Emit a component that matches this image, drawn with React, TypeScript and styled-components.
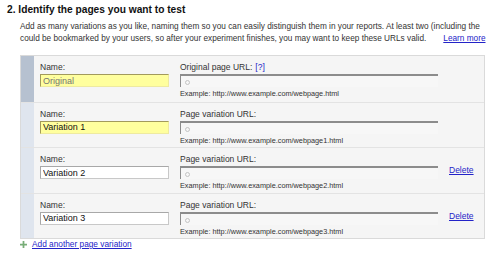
import React from "react";
import styled, { createGlobalStyle } from "styled-components";

const COLORS = {
  text: "#222222",
  link: "#2323c8",
  border: "#dadada",
  rowBg: "#f5f5f5",
  handle: "#dfe5ee",
  handleActive: "#b6c1d0",
  highlight: "#ffff9e",
};

interface Variation {
  name: string;
  urlLabel: string;
  example: string;
  placeholder?: boolean;
  highlight?: boolean;
  deletable?: boolean;
}

const VARIATIONS: Variation[] = [
  {
    name: "Original",
    urlLabel: "Original page URL:",
    example: "http://www.example.com/webpage.html",
    placeholder: true,
    highlight: true,
  },
  {
    name: "Variation 1",
    urlLabel: "Page variation URL:",
    example: "http://www.example.com/webpage1.html",
    highlight: true,
  },
  {
    name: "Variation 2",
    urlLabel: "Page variation URL:",
    example: "http://www.example.com/webpage2.html",
    deletable: true,
  },
  {
    name: "Variation 3",
    urlLabel: "Page variation URL:",
    example: "http://www.example.com/webpage3.html",
    deletable: true,
  },
];

const App = () => {
  return (
    <>
      <GlobalStyle />
      <Page>
        <Heading>2. Identify the pages you want to test</Heading>

        <Intro>
          <IntroLine>
            Add as many variations as you like, naming them so you can easily
            distinguish them in your reports. At least two (including the
          </IntroLine>
          <IntroLine>
            could be bookmarked by your users, so after your experiment
            finishes, you may want to keep these URLs valid.
            <LearnMore href="#">Learn more</LearnMore>
          </IntroLine>
        </Intro>

        <Table>
          {VARIATIONS.map((item, i) => (
            <Row key={item.name} first={i === 0}>
              <Handle active={i === 0} />

              <NameCell>
                <Label>Name:</Label>
                <NameInput
                  type="text"
                  readOnly
                  highlight={item.highlight}
                  value={item.placeholder ? "" : item.name}
                  placeholder={item.placeholder ? item.name : undefined}
                />
              </NameCell>

              <UrlCell>
                <Label>
                  {item.urlLabel}
                  {i === 0 && <Help href="#">[?]</Help>}
                </Label>
                <UrlField>
                  <Dot />
                </UrlField>
                <Example>Example: {item.example}</Example>
              </UrlCell>

              <DeleteCell>
                {item.deletable && <TextLink href="#">Delete</TextLink>}
              </DeleteCell>
            </Row>
          ))}
        </Table>

        <AddRow>
          <PlusIcon viewBox="0 0 8 8">
            <path d="M3 0h2v3h3v2H5v3H3V5H0V3h3z" fill="#78ad78" />
          </PlusIcon>
          <TextLink href="#">Add another page variation</TextLink>
        </AddRow>
      </Page>
    </>
  );
};

const GlobalStyle = createGlobalStyle`
  body {
    margin: 0;
    background: #ffffff;
    overflow: hidden;
    font-family: "Liberation Sans", Arial, sans-serif;
    color: ${COLORS.text};
  }
`;

const Page = styled.div`
  width: 500px;
  height: 257px;
  overflow: hidden;
  padding-top: 4px;
  box-sizing: border-box;
`;

const Heading = styled.h2`
  margin: 0 0 0 7px;
  font-size: 10.2px;
  line-height: 12px;
  font-weight: bold;
  color: #111111;
`;

const Intro = styled.div`
  margin: 5px 0 0 20px;
  font-size: 8.25px;
  line-height: 12px;
  color: #333333;
`;

const IntroLine = styled.div`
  white-space: nowrap;
`;

const TextLink = styled.a`
  color: ${COLORS.link};
  text-decoration: underline;
`;

const LearnMore = styled(TextLink)`
  margin-left: 17px;
`;

const Help = styled(TextLink)`
  margin-left: 3px;
  text-decoration: none;
`;

const Table = styled.div`
  display: flex;
  flex-direction: column;
  width: 465px;
  margin: 10px 0 0 20px;
  border: 1px solid ${COLORS.border};
  box-sizing: border-box;
  background: ${COLORS.rowBg};
`;

const Row = styled.div<{ first?: boolean }>`
  display: flex;
  height: 45.5px;
  border-top: ${({ first }) => (first ? "none" : "1px solid #e3e3e3")};
  box-sizing: border-box;
`;

const Handle = styled.div<{ active?: boolean }>`
  width: 13px;
  flex-shrink: 0;
  background: ${({ active }) =>
    active ? COLORS.handleActive : COLORS.handle};
`;

const NameCell = styled.div`
  display: flex;
  flex-direction: column;
  width: 129px;
  margin-left: 6px;
  padding-top: 6px;
`;

const Label = styled.div`
  font-size: 8.5px;
  line-height: 10px;
  color: #333333;
  margin-bottom: 2px;
`;

const NameInput = styled.input<{ highlight?: boolean }>`
  width: 129px;
  height: 13px;
  box-sizing: border-box;
  margin: 0;
  padding: 0 2px;
  font-family: inherit;
  font-size: 9px;
  color: #111111;
  outline: none;
  background: ${({ highlight }) => (highlight ? COLORS.highlight : "#ffffff")};
  border: 1px solid;
  border-color: ${({ highlight }) =>
    highlight
      ? "#a29a5c #eeeaa0 #eeeaa0 #a29a5c"
      : "#a8a8a8 #c8c8c8 #c8c8c8 #a8a8a8"};

  ::placeholder {
    color: #b5b08a;
  }
`;

const UrlCell = styled.div`
  display: flex;
  flex-direction: column;
  width: 258px;
  margin-left: 11px;
  padding-top: 6px;
`;

const UrlField = styled.div`
  position: relative;
  height: 13px;
  box-sizing: border-box;
  border-top: 2px solid #8c8c8c;
  border-left: 1px solid #8c8c8c;
  background: #f7f7f7;
`;

const Dot = styled.span`
  position: absolute;
  left: 4px;
  top: 4px;
  width: 3px;
  height: 3px;
  border: 1px solid #c4c4c4;
  border-radius: 50%;
`;

const Example = styled.div`
  margin-top: 3px;
  font-size: 7.3px;
  line-height: 8px;
  color: #333333;
`;

const DeleteCell = styled.div`
  display: flex;
  align-items: center;
  margin-left: 11px;
  font-size: 8.5px;
`;

const AddRow = styled.div`
  display: flex;
  align-items: center;
  gap: 5px;
  margin: 0 0 0 20px;
  font-size: 8.3px;
`;

const PlusIcon = styled.svg`
  width: 7px;
  height: 7px;
`;

export default App;
